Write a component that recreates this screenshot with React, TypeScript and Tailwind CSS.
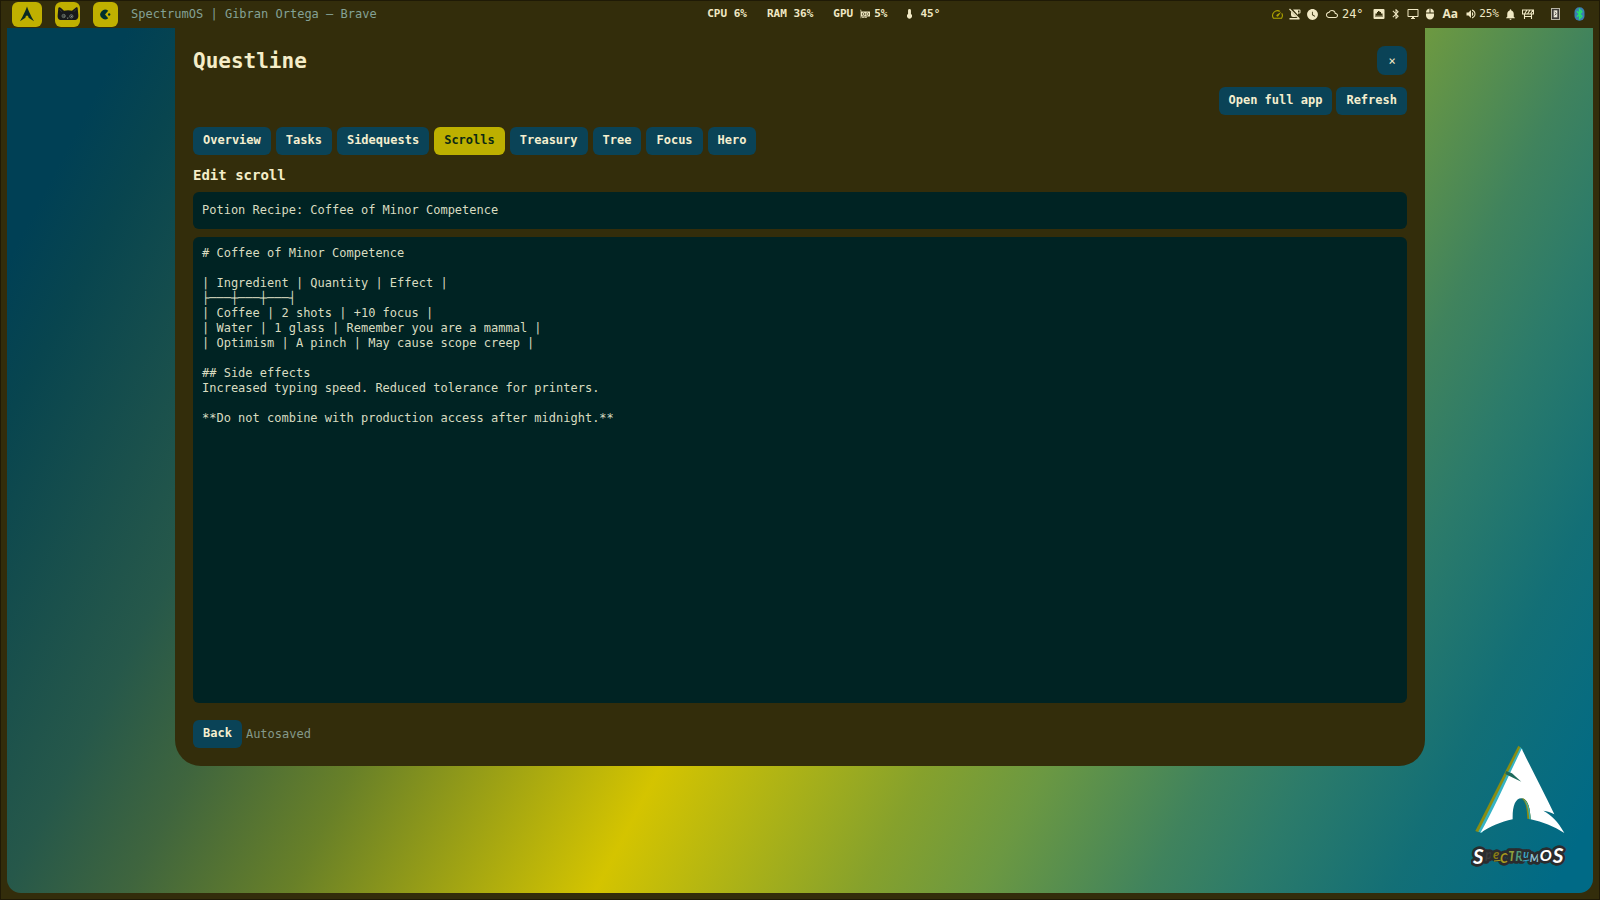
import { useState } from 'react'
import type { ReactNode } from 'react'
import { BsGpuCard } from 'react-icons/bs'
import {
  MdBluetooth,
  MdMouse,
  MdNotifications,
  MdOutlineCloud,
  MdOutlineDesktopWindows,
  MdSpeed,
  MdVolumeUp,
  MdWatchLater,
} from 'react-icons/md'

const TABS = ['Overview', 'Tasks', 'Sidequests', 'Scrolls', 'Treasury', 'Tree', 'Focus', 'Hero']

const SCROLL_BODY = `# Coffee of Minor Competence

| Ingredient | Quantity | Effect |
├───┼───┼───┤
| Coffee | 2 shots | +10 focus |
| Water | 1 glass | Remember you are a mammal |
| Optimism | A pinch | May cause scope creep |

## Side effects
Increased typing speed. Reduced tolerance for printers.

**Do not combine with production access after midnight.**`

function ArchIcon() {
  return (
    <svg viewBox="0 0 16 16" className="size-4" fill="#0a2a22">
      <path d="M8 0.5C7 3.6 4.4 9.4 1 15.2l5.400-3.400C6.600 10.200 7.200 9.400 8 9.400s1.400.8 1.600 2.400l5.400 3.400C11.600 9.400 9 3.600 8 .5z" />
    </svg>
  )
}

function CatIcon() {
  return (
    <svg viewBox="0 0 66 42" className="h-[14px] w-[22px]">
      <path
        d="M4 3C5 0 9 0 12 3l9 8c8-2 17-2 24 0l11-9c3-2 6-1 6 2l2 20c1 9-3 14-9 15H10C4 38 1 33 2 25z"
        fill="#17191a"
      />
      <circle cx="20" cy="27" r="5" fill="#1b2020" stroke="#8b958a" strokeWidth="2" />
      <circle cx="43" cy="28" r="5" fill="#1b2020" stroke="#8b958a" strokeWidth="2" />
      <circle cx="21" cy="27" r="1.500" fill="#e4e8dc" />
      <circle cx="44" cy="28" r="1.500" fill="#e4e8dc" />
      <path d="M29 32l3 3 3-3z" fill="#b9c2b0" />
      <path d="M8 7l6 7M57 7l-6 7" stroke="#454a48" strokeWidth="2" />
    </svg>
  )
}

function PacmanIcon() {
  return (
    <svg viewBox="0 0 24 24" className="size-[11px]" fill="#00302c">
      <path d="M18 4A10.500 10.500 0 1 0 18 20L11 12z" />
      <circle cx="20" cy="12" r="2.600" />
    </svg>
  )
}

function ThermometerIcon() {
  return (
    <svg viewBox="0 0 12 24" className="h-[10px] w-[5px]" fill="currentColor">
      <path d="M6 0a3.500 3.500 0 0 1 3.500 3.500V12a6 6 0 1 1-7 0V3.500A3.500 3.500 0 0 1 6 0z" />
    </svg>
  )
}

function CoffeeOffIcon() {
  return (
    <svg viewBox="0 0 24 24" className="size-3" fill="currentColor">
      <path d="M8 3h13a2 2 0 0 1 2 2v4a2 2 0 0 1-2 2h-3v3zM18 5v4h3V5z" fillRule="evenodd" />
      <path d="M4 7l11 11H8a4 4 0 0 1-4-4zM1 20h20v3H1z" />
      <path d="M1 2l19 19" stroke="currentColor" strokeWidth="2.500" />
    </svg>
  )
}

function EthernetIcon() {
  return (
    <svg viewBox="0 0 24 24" className="size-3" fill="currentColor">
      <path
        fillRule="evenodd"
        d="M3 2h18a2 2 0 0 1 2 2v16a2 2 0 0 1-2 2H3a2 2 0 0 1-2-2V4a2 2 0 0 1 2-2zM5 18h2v-3h2v3h2v-3h2v3h2v-3h2v3h2V11h-3V8h-3V6H10v2H8v3H5z"
      />
    </svg>
  )
}

function BarrierIcon() {
  return (
    <svg viewBox="0 0 24 24" className="size-3" fill="none" stroke="currentColor" strokeWidth="2.200">
      <path d="M1 4h22v8H1zM5 12v10M19 12v10M5 17h14M5 12l5-8M11 12l5-8M17 12l5-8" />
    </svg>
  )
}

function DeviceIcon() {
  return (
    <svg viewBox="0 0 27 36" className="h-3 w-[9px]">
      <rect x="1.500" y="1.500" width="24" height="33" fill="#3c3a36" stroke="#b6b3a4" strokeWidth="3" />
      <rect x="8" y="7" width="11" height="21" fill="#e9e6d8" />
      <path d="M11 12l5 5-5 5" stroke="#3c3a36" strokeWidth="2.500" fill="none" />
    </svg>
  )
}

function BluetoothBadge() {
  return (
    <svg viewBox="0 0 32 42" className="h-[14px] w-[11px]">
      <rect x="1" y="1" width="30" height="40" rx="14" fill="#3b7fb0" />
      <path d="M8 13l15 15-7 7V7l7 7L8 29" fill="none" stroke="#25e36a" strokeWidth="4" />
    </svg>
  )
}

// letters are placed one by one so each keeps its own colour and size
const WORDMARK = [
  { ch: 'S', x: 101, y: 404, size: 62, fill: '#ffffff' },
  { ch: 'p', x: 138, y: 388, size: 38, fill: '#3a3b3d' },
  { ch: 'e', x: 161, y: 388, size: 40, fill: '#8a7d14' },
  { ch: 'C', x: 182, y: 399, size: 38, fill: '#a99a1c' },
  { ch: 'T', x: 207, y: 395, size: 38, fill: '#8fa03a' },
  { ch: 'R', x: 228, y: 393, size: 38, fill: '#4f9a7c' },
  { ch: 'u', x: 252, y: 386, size: 34, fill: '#3aa6c8' },
  { ch: 'M', x: 271, y: 398, size: 32, fill: '#8fc4d8' },
  { ch: 'O', x: 301, y: 394, size: 48, fill: '#ffffff' },
  { ch: 'S', x: 340, y: 400, size: 62, fill: '#ffffff' },
]

function SpectrumLogo() {
  return (
    <svg
      viewBox="95 40 291 381"
      className="absolute right-[25px] bottom-[23px] h-[127px] w-[97px]"
      role="img"
      aria-label="SpectrumOS"
    >
      <path d="M237 48l8 6L118 308l-10-4z" fill="#8a8d12" />
      <path d="M243 53l7 6L128 310l-11-4z" fill="#35b3c4" />
      <path
        d="M247 57C275 115 312 184 345 254c-11-6-21-9-33-11 24 13 44 32 63 67-32-20-65-34-101-41-2-40-10-63-28-63-18 0-27 24-26 63-36 8-66 21-97 41C165 235 207 140 247 57z"
        fill="#ffffff"
      />
      <path d="M246 206c18 0 26 23 28 63l-10-2c-1-34-5-52-18-61z" fill="#8a8d12" />
      <path d="M253 209c13 9 19 30 21 60h-4c-2-28-7-49-17-60z" fill="#35b3c4" />
      <path d="M200 124l18 7 28 25-28-13-20-10z" fill="#1e6a5c" />
      <g
        fontFamily="Lato, sans-serif"
        fontWeight="700"
        fontStyle="italic"
        stroke="#2b2c2e"
        strokeWidth="16"
        strokeLinejoin="round"
        paintOrder="stroke"
      >
        {WORDMARK.map(({ ch, x, y, size, fill }) => (
          <text key={x} x={x} y={y} fontSize={size} fill={fill}>
            {ch}
          </text>
        ))}
      </g>
      <path d="M164 394l20-2" stroke="#a99a1c" strokeWidth="3" />
      <path d="M250 394l20-3" stroke="#3aa6c8" strokeWidth="3" />
    </svg>
  )
}

function TopBar() {
  return (
    <header className="flex h-[27px] items-center justify-between pr-[14px] pb-px pl-[11px] text-[#f0e8c4]">
      <div className="flex items-center">
        <button aria-label="Menu" className="flex h-[25px] w-[30px] items-center justify-center rounded-md bg-[#c0b000]">
          <ArchIcon />
        </button>
        <button aria-label="Cat" className="ml-[13px] flex size-[25px] items-center justify-center rounded-md bg-[#c0b000]">
          <CatIcon />
        </button>
        <button aria-label="Updates" className="ml-[13px] flex size-[25px] items-center justify-center rounded-md bg-[#c0b000]">
          <PacmanIcon />
        </button>
        <span className="ml-[13px] text-xs text-[#84a195]">SpectrumOS | Gibran Ortega – Brave</span>
      </div>

      <div className="flex items-center gap-5 text-[11px] font-bold">
        <span>CPU 6%</span>
        <span>RAM 36%</span>
        <span className="flex items-center">
          GPU
          <BsGpuCard className="mr-1 ml-[7px] size-[10px]" />
          5%
        </span>
        <span className="flex items-center gap-2">
          <ThermometerIcon />
          45°
        </span>
      </div>

      <div className="flex items-center gap-[5px] text-xs">
        <MdSpeed className="size-[13px] text-[#b0a600]" />
        <CoffeeOffIcon />
        <MdWatchLater className="size-[13px]" />
        <span className="mr-1 ml-[2px] flex items-center gap-1">
          <MdOutlineCloud className="size-3" />
          24°
        </span>
        <EthernetIcon />
        <MdBluetooth className="size-3" />
        <MdOutlineDesktopWindows className="size-3" />
        <MdMouse className="size-3" />
        <span className="mx-[2px] font-['Open_Sans',sans-serif] font-bold">Aa</span>
        <span className="flex items-center gap-[2px] text-[11px]">
          <MdVolumeUp className="size-3" />
          25%
        </span>
        <MdNotifications className="size-[13px]" />
        <BarrierIcon />
        <span className="ml-3 flex items-center gap-[14px]">
          <DeviceIcon />
          <BluetoothBadge />
        </span>
      </div>
    </header>
  )
}

interface PanelButtonProps {
  children: ReactNode
  active?: boolean
  onClick?: () => void
}

function PanelButton({ children, active, onClick }: PanelButtonProps) {
  return (
    <button
      onClick={onClick}
      className={`h-7 rounded-md px-[10px] pb-[2px] text-xs font-bold ${
        active ? 'bg-[#bdb000] text-[#0c2a14]' : 'bg-[#0a4357] text-[#f5efcf]'
      }`}
    >
      {children}
    </button>
  )
}

export default function App() {
  const [tab, setTab] = useState('Scrolls')
  const [title, setTitle] = useState('Potion Recipe: Coffee of Minor Competence')
  const [body, setBody] = useState(SCROLL_BODY)

  return (
    <div className="flex min-h-screen flex-col border border-[#1f1a06] bg-[#332d0b] font-['DejaVu_Sans_Mono',monospace]">
      <TopBar />

      <main className="relative mx-[6px] mb-[6px] flex flex-1 items-start justify-center rounded-b-[14px] bg-[linear-gradient(117.6deg,#004055_6%,#08454f_10%,#26584a_22%,#3f653e_28%,#688028_36%,#d4c400_51%,#86a12c_64%,#6b9842_70%,#40835d_78%,#2c7b6a_83%,#136f76_90%,#006a86_98%)]">
        <section className="w-full max-w-[1250px] rounded-b-[26px] bg-[#332d0b] p-[18px] text-[#f5edc8]">
          <div className="flex h-[29px] items-center justify-between">
            <h1 className="text-[21px] leading-7 font-bold">Questline</h1>
            <button aria-label="Close" className="h-[29px] w-[30px] rounded-lg bg-[#0a4357] text-xs">
              ×
            </button>
          </div>

          <div className="mt-3 flex justify-end gap-1">
            <PanelButton>Open full app</PanelButton>
            <PanelButton>Refresh</PanelButton>
          </div>

          <nav className="mt-3 flex gap-[5px]">
            {TABS.map((name) => (
              <PanelButton key={name} active={name === tab} onClick={() => setTab(name)}>
                {name}
              </PanelButton>
            ))}
          </nav>

          <h2 className="mt-[10px] text-sm leading-5 font-bold">Edit scroll</h2>

          <input
            aria-label="Scroll title"
            value={title}
            onChange={(e) => setTitle(e.target.value)}
            className="mt-[7px] block h-[37px] w-full rounded-md bg-[#002323] px-[9px] pb-[2px] text-xs text-[#d9dcc0] outline-none"
          />
          <textarea
            aria-label="Scroll body"
            rows={30}
            spellCheck={false}
            value={body}
            onChange={(e) => setBody(e.target.value)}
            className="mt-2 block w-full resize-none rounded-md bg-[#002323] px-[9px] pt-[9px] pb-[7px] text-xs leading-[15px] text-[#d9dcc0] outline-none"
          />

          <div className="mt-[17px] flex items-center gap-1">
            <PanelButton>Back</PanelButton>
            <span className="text-xs text-[#84998a]">Autosaved</span>
          </div>
        </section>

        <SpectrumLogo />
      </main>
    </div>
  )
}
